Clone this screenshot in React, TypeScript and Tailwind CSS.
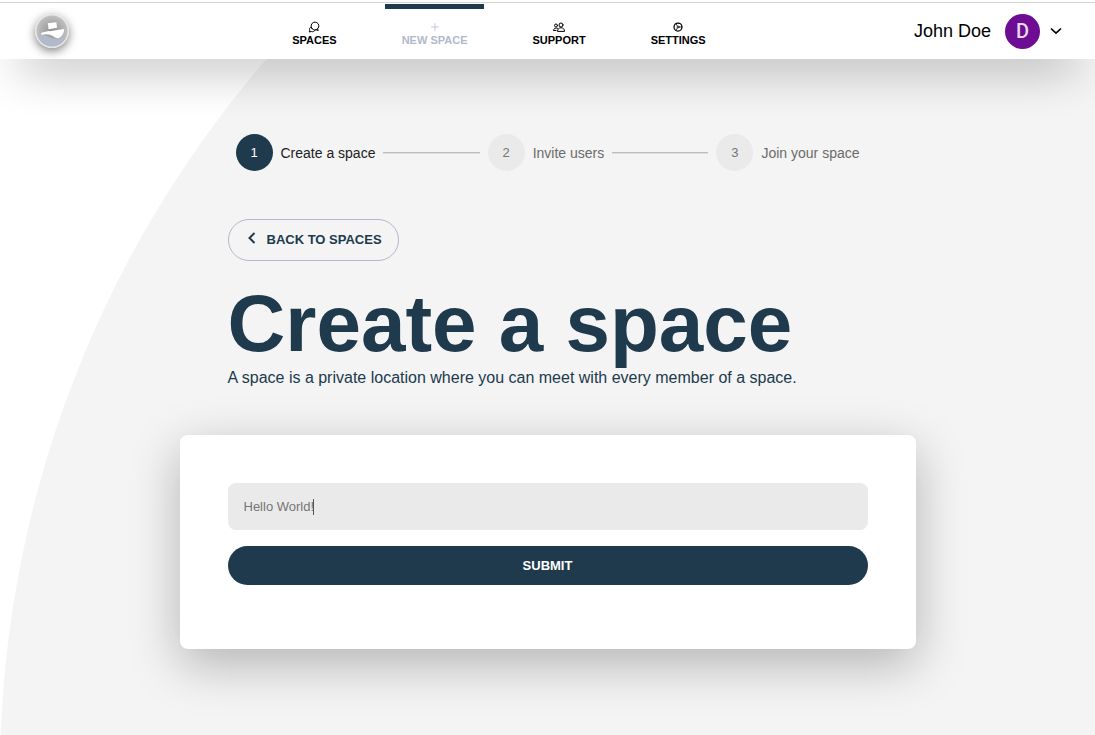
import { Fragment } from "react";

const navItems = [
  { label: "SPACES", icon: "chat", active: false },
  { label: "NEW SPACE", icon: "plus", active: true },
  { label: "SUPPORT", icon: "people", active: false },
  { label: "SETTINGS", icon: "gear", active: false },
];

const steps = ["Create a space", "Invite users", "Join your space"];

function NavIcon({ name }: { name: string }) {
  return (
    <svg
      viewBox="0 0 24 24"
      className="h-3 w-3"
      fill="none"
      stroke="currentColor"
      strokeWidth="2"
      strokeLinecap="round"
      strokeLinejoin="round"
      aria-hidden="true"
    >
      {name === "chat" && (
        <>
          <path d="M7.500 14.500a7.800 7.800 0 1 1 6 3.300c-2.500 0-4.600-1.200-6-3.300z" />
          <path d="M19 15.500l1.500 3.500-4-1.500" />
          <path d="M5 12.500c-2 1.500-2.500 4-1.500 6L2.500 22l4-1c3 1.200 6 .2 8-2.500" />
        </>
      )}
      {name === "plus" && <path d="M12 5v14M5 12h14" strokeWidth="1.500" />}
      {name === "people" && (
        <>
          <circle cx="16" cy="8" r="4" />
          <path d="M9 20c0-4 3-6.500 7-6.500s7 2.500 7 6.500z" />
          <circle cx="6" cy="9" r="3" />
          <path d="M9 14.500c-4-1.500-8 .5-8 4.500h5" />
        </>
      )}
      {name === "gear" && (
        <>
          <circle cx="12" cy="12" r="8" strokeWidth="2.500" />
          <circle cx="12" cy="12" r="2" strokeWidth="1.500" />
          <path d="M14.500 12h5M10.800 10 8 5.500M10.800 14 8 18.500" strokeWidth="1.500" />
        </>
      )}
    </svg>
  );
}

function Logo() {
  return (
    <svg viewBox="0 0 34 34" className="h-[34px] w-[34px] rounded-full shadow-[0_3px_10px_rgba(0,0,0,0.5)]" role="img" aria-label="Ship">
      <defs>
        <radialGradient id="sky" cx="50%" cy="50%" r="50%">
          <stop offset="0" stopColor="#8f8f8f" />
          <stop offset="1" stopColor="#c4c4c4" />
        </radialGradient>
        <clipPath id="disc">
          <circle cx="17" cy="17" r="16" />
        </clipPath>
      </defs>
      <circle cx="17" cy="17" r="16.500" fill="url(#sky)" />
      <g clipPath="url(#disc)">
        <path d="M1 22.500c4-2.200 8-2 12 0 5 2.500 8 3.500 11 2.200 3-1.200 5-1.600 8-1.200V34H1z" fill="#b0bacb" />
      </g>
      <circle cx="17" cy="17" r="16.200" fill="none" stroke="#e6e6e6" strokeWidth="1.400" />
      <path d="M12.700 9.300 21.400 8.300 22 13.700 13.600 15.200z" fill="#fff" />
      <path d="M6.500 18.800 13.500 17l1 .2 14.800-2.200c-.2 4-2.300 7.500-5.500 9.200-2.500.3-4.800-1.700-8.300-3.200-3-1.200-6-.9-9.500-.3z" fill="#fff" />
    </svg>
  );
}

export default function App() {
  return (
    <div className="relative isolate min-h-screen bg-white font-['Liberation_Sans',Arial,sans-serif] text-black">
      <div className="absolute inset-0 -z-10 overflow-hidden">
        <div className="-mt-80 h-[200vw] w-[200vw] rounded-full bg-[#f4f4f4]" />
      </div>

      <header className="bg-white pt-0.5 shadow-[0_25px_48px_-20px_rgba(0,0,0,0.46)]">
        <div className="flex h-[57px] items-stretch justify-between border-t border-[#d3d3d3] pr-[33px] pl-8">
          <a href="#home" className="flex w-[52px] items-center pl-[3px]">
            <Logo />
          </a>
          <nav className="flex gap-[31px]">
            {navItems.map((item) => (
              <a
                key={item.label}
                href={`#${item.icon}`}
                aria-current={item.active ? "page" : undefined}
                className={
                  item.active
                    ? "mt-px flex flex-col items-center border-t-[5px] border-[#203a4d] px-[17px] pt-3 text-[11px] leading-[14px] font-bold text-[#b0bacb]"
                    : "mt-px flex flex-col items-center border-t-[5px] border-transparent px-[17px] pt-3 text-[11px] leading-[14px] font-bold"
                }
              >
                <NavIcon name={item.icon} />
                {item.label}
              </a>
            ))}
          </nav>
          <button type="button" className="flex items-center">
            <span className="text-lg">John Doe</span>
            <span className="ml-3.5 flex h-[35px] w-[35px] items-center justify-center rounded-full bg-[#6d0d93] font-[Roboto,sans-serif] text-xl font-medium text-[#e8d8ef]">
              D
            </span>
            <svg viewBox="0 0 12 12" className="ml-2.5 h-3 w-3" fill="none" stroke="currentColor" strokeWidth="1.700" aria-hidden="true">
              <path d="M1 3.500l5 4.700 5-4.700" />
            </svg>
          </button>
        </div>
      </header>

      <main className="mx-auto max-w-[736px] pt-[67px]">
        <div className="px-12">
          <ol className="flex items-center p-2">
            {steps.map((step, i) => (
              <Fragment key={step}>
                {i > 0 && <li aria-hidden="true" className="mx-2 h-0.5 flex-1 border-t border-[#bdbdbd] bg-[#dedede]" />}
                <li className="flex items-center gap-2">
                  <span
                    className={
                      i === 0
                        ? "flex h-[37px] w-[37px] items-center justify-center rounded-full bg-[#203a4d] text-[13px] text-white"
                        : "flex h-[37px] w-[37px] items-center justify-center rounded-full bg-[#eaeaea] text-[13px] text-[#757575]"
                    }
                  >
                    {i + 1}
                  </span>
                  <span className={i === 0 ? "text-sm text-[#212121]" : "text-sm text-[#6b6b6b]"}>{step}</span>
                </li>
              </Fragment>
            ))}
          </ol>

          <button
            type="button"
            className="mt-10 flex h-[42px] items-center rounded-full border border-[#b0bacb] px-4 text-[13px] font-bold text-[#203a4d]"
          >
            <svg viewBox="0 0 14 14" className="mr-2 mb-1 h-3.5 w-3.5" fill="none" stroke="currentColor" strokeWidth="2" aria-hidden="true">
              <path d="M9.500 2 4.500 7l5 5" />
            </svg>
            BACK TO SPACES
          </button>

          <h1 className="mt-[23px] text-[80px] leading-[80px] font-bold text-[#203a4d]">Create a space</h1>
          <p className="mt-0.5 text-base text-[#203a4d]">
            A space is a private location where you can meet with every member of a space.
          </p>
        </div>

        <form
          className="mt-[45px] rounded-lg bg-white px-12 pt-12 pb-16 shadow-[0_15px_50px_rgba(0,0,0,0.27)]"
          onSubmit={(e) => e.preventDefault()}
        >
          <div className="relative">
            <input
              type="text"
              aria-label="Space name"
              defaultValue="Hello World!"
              className="peer block h-[47px] w-full rounded-lg bg-[#eaeaea] px-4 text-[13px] text-[#757575] outline-none"
            />
            <span aria-hidden="true" className="absolute top-4 left-[85px] h-4 w-px bg-[#555555] peer-focus:hidden" />
          </div>
          <button type="submit" className="mt-4 block h-[39px] w-full rounded-full bg-[#203a4d] text-[13px] font-bold text-white">
            SUBMIT
          </button>
        </form>
      </main>
    </div>
  );
}
